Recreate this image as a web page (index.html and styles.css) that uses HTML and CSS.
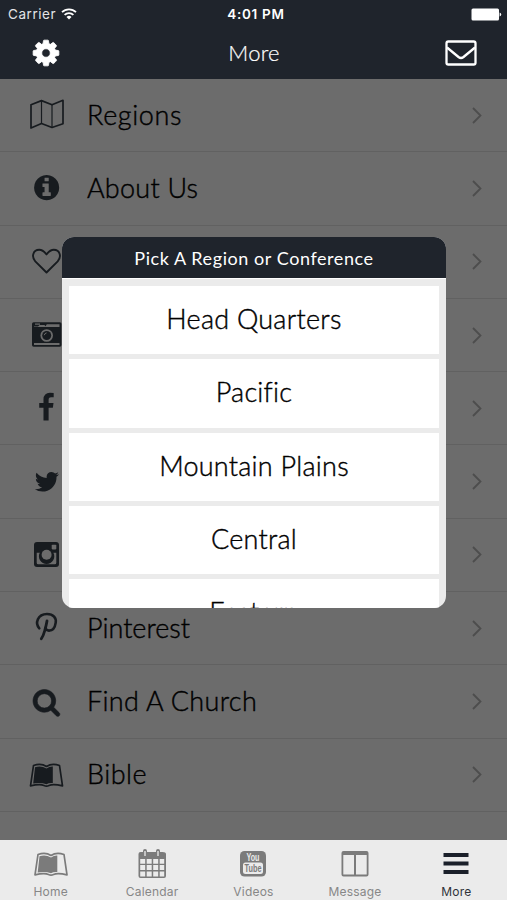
FILE: index.html
```html
<!DOCTYPE html>
<html lang="en">
<head>
<meta charset="utf-8">
<title>More</title>
<link rel="stylesheet" href="styles.css">
</head>
<body>
<div class="app">
  <header class="top">
    <div class="status">
      <div class="carrier"><span>Carrier</span>
        <svg width="16" height="12" viewBox="0 0 16 12" fill="none" stroke="#fff" stroke-width="1.8"><path d="M1 4.2a10 10 0 0 1 14 0M3.6 6.9a6.300 6.300 0 0 1 8.800 0"/><path d="M8 11.500L5.500 9a3.600 3.600 0 0 1 5 0z" fill="#fff" stroke="none"/></svg>
      </div>
      <div class="clock">4:01 PM</div>
      <div class="battery"><svg width="31" height="13" viewBox="0 0 31 13" fill="#fff"><rect x="0.500" y="0.500" width="27.500" height="12" rx="1.500"/><path d="M28.600 4.500q1.600.4 1.600 2t-1.600 2z"/></svg></div>
    </div>
    <div class="nav">
      <svg class="cog" width="30" height="30" viewBox="0 0 1792 1792" fill="#fff"><path stroke="#fff" stroke-width="50" d="M1152 896q0-106-75-181t-181-75-181 75-75 181 75 181 181 75 181-75 75-181zm512-109v222q0 12-8 23t-20 13l-185 28q-19 54-39 91 35 50 107 138 10 12 10 25t-9 23q-27 37-99 108t-94 71q-12 0-26-9l-138-108q-44 23-91 38-16 136-29 186-7 28-36 28h-222q-14 0-24.500-8.500t-11.500-21.500l-28-184q-49-16-90-37l-141 107q-10 9-25 9-14 0-25-11-126-114-165-168-7-10-7-23 0-12 8-23 15-21 51-66.500t54-70.500q-27-50-41-99l-183-27q-13-2-21-12.500t-8-23.500v-222q0-12 8-23t19-13l186-28q14-46 39-92-40-57-107-138-10-12-10-24 0-10 9-23 26-36 98.500-107.500t94.500-71.500q13 0 26 10l138 107q44-23 91-38 16-136 29-186 7-28 36-28h222q14 0 24.500 8.500t11.500 21.500l28 184q49 16 90 37l142-107q9-9 24-9 13 0 25 10 129 119 165 170 7 8 7 22 0 12-8 23-15 21-51 66.500t-54 70.500q26 50 41 98l183 28q13 2 21 12.500t8 23.500z"/></svg>
      <h1>More</h1>
      <svg class="mail" width="32" height="26" viewBox="0 0 32 26" fill="none" stroke="#fff" stroke-width="2.300" stroke-linejoin="round"><rect x="1.500" y="1.500" width="29" height="23" rx="1.800"/><path d="M2 7.500L13.500 17q2.500 1.900 5 0L30 7.500"/></svg>
    </div>
  </header>

  <main class="list">
    <div class="row"><svg class="ico line" viewBox="0 0 40 40"><path stroke-width="1.700" d="M4 9.800L14.500 5.600 25 9.800 36 5.300V28.700L25 32.500 14.500 28.500 4 33z"/><path stroke-width="1.200" d="M14.500 5.600V28.500M25 9.800V32.500"/></svg><span class="name n1">Regions</span><svg class="chev" viewBox="0 0 11 17"><path d="M1 1l7.500 7.500L1 16"/></svg></div>
    <div class="row"><svg class="ico" viewBox="0 0 40 40"><path transform="translate(5 5) scale(.01634)" d="M1152 1376v-160q0-14-9-23t-23-9h-96v-512q0-14-9-23t-23-9h-320q-14 0-23 9t-9 23v160q0 14 9 23t23 9h96v320h-96q-14 0-23 9t-9 23v160q0 14 9 23t23 9h448q14 0 23-9t9-23zm-128-896v-160q0-14-9-23t-23-9h-192q-14 0-23 9t-9 23v160q0 14 9 23t23 9h192q14 0 23-9t9-23zm640 416q0 209-103 385.500t-279.500 279.500-385.500 103-385.500-103-279.500-279.500-103-385.500 103-385.500 279.500-279.500 385.500-103 385.500 103 279.500 279.500 103 385.500z"/></svg><span class="name n2">About Us</span><svg class="chev" viewBox="0 0 11 17"><path d="M1 1l7.500 7.500L1 16"/></svg></div>
    <div class="row"><svg class="ico line" viewBox="0 0 40 40"><path stroke-width="1.900" d="M19.500 30.500L8.300 19.300C4 14.500 6.300 7.800 12.200 7.800c3.700 0 5.500 2.500 7.300 4.600 1.800-2.100 3.600-4.600 7.300-4.600 5.900 0 8.200 6.700 3.900 11.500z"/></svg><span class="name"></span><svg class="chev" viewBox="0 0 11 17"><path d="M1 1l7.500 7.500L1 16"/></svg></div>
    <div class="row"><svg class="ico" viewBox="0 0 40 40"><rect x="5" y="7.300" width="29.500" height="24.500" rx="1.700"/><path class="cut" d="M7 11.500h4l1.500-1.500h5l1 1.200 1.300-2H32.500v2.800H7zM7 28h25.500v1.900H7z"/><rect class="cut" x="8" y="8.500" width="5" height="1.200"/><circle class="cut" cx="19.700" cy="20.500" r="6.300"/><circle cx="19.700" cy="20.500" r="4.500"/><path d="M17.300 20.200q.2-2 2.300-2.300" fill="none" stroke="#6c6c6c"/></svg><span class="name"></span><svg class="chev" viewBox="0 0 11 17"><path d="M1 1l7.500 7.500L1 16"/></svg></div>
    <div class="row"><svg class="ico" viewBox="0 0 40 40"><path transform="translate(4.200 4.700) scale(.01674)" d="M1343 12v264h-157q-86 0-116 36t-30 108v189h293l-39 296h-254v759h-306v-759h-255v-296h255v-218q0-186 104-288.500t277-102.500q147 0 228 12z"/></svg><span class="name"></span><svg class="chev" viewBox="0 0 11 17"><path d="M1 1l7.500 7.500L1 16"/></svg></div>
    <div class="row"><svg class="ico" viewBox="0 0 40 40"><path transform="translate(6.200 6) scale(.01530)" d="M1684 408q-67 98-162 167 1 14 1 42 0 130-38 259.500t-115.500 248.500-184.500 210.500-258 146-323 54.500q-271 0-496-145 35 4 78 4 225 0 401-138-105-2-188-64.500t-114-159.500q33 5 61 5 43 0 85-11-112-23-185.500-111.500t-73.500-205.500v-4q68 38 146 41-66-44-105-115t-39-154q0-88 44-163 121 149 294.500 238.500t371.500 99.500q-8-38-8-74 0-134 94.500-228.500t228.500-94.500q140 0 236 102 109-21 205-78-37 115-142 178 93-10 186-50z"/></svg><span class="name"></span><svg class="chev" viewBox="0 0 11 17"><path d="M1 1l7.500 7.500L1 16"/></svg></div>
    <div class="row"><svg class="ico" viewBox="0 0 40 40"><rect x="7" y="7" width="25" height="25" rx="3"/><path class="cut" d="M9.700 17.700h3.100a7.700 7.700 0 1 0 13.600 0h2.900v10q0 1.500-1.500 1.500H11.200q-1.500 0-1.500-1.500z"/><circle class="cut" cx="19.600" cy="19.700" r="5"/><rect class="cut" x="24.700" y="9.700" width="4.600" height="4.700" rx=".8"/></svg><span class="name"></span><svg class="chev" viewBox="0 0 11 17"><path d="M1 1l7.500 7.500L1 16"/></svg></div>
    <div class="row"><svg class="ico line" viewBox="0 0 40 40"><path stroke-width="2.600" d="M12.300 20.300C7.800 15.500 10.500 6 20 6c6.500 0 9.500 4.200 8.700 8.600-.7 5-3.400 8-6.700 8-2 0-3.500-1.100-3.300-3"/><path stroke-width="2.800" d="M20 13q-1 5.500-2.200 9.500-1.500 5.500-3.500 8.300"/></svg><span class="name n3">Pinterest</span><svg class="chev" viewBox="0 0 11 17"><path d="M1 1l7.500 7.500L1 16"/></svg></div>
    <div class="row"><svg class="ico" viewBox="0 0 40 40"><path stroke="#171b1f" stroke-width="40" transform="translate(5 5.500) scale(.01610)" d="M1216 832q0-185-131.500-316.500t-316.500-131.500-316.500 131.500-131.500 316.500 131.500 316.500 316.500 131.500 316.500-131.500 131.500-316.500zm512 832q0 52-38 90t-90 38q-54 0-90-38l-343-342q-179 124-399 124-143 0-273.500-55.500t-225-150-150-225-55.500-273.500 55.500-273.500 150-225 225-150 273.500-55.500 273.500 55.500 225 150 150 225 55.500 273.500q0 220-124 399l343 343q37 37 37 90z"/></svg><span class="name n4">Find A Church</span><svg class="chev" viewBox="0 0 11 17"><path d="M1 1l7.500 7.500L1 16"/></svg></div>
    <div class="row"><svg class="ico" viewBox="0 0 40 40"><g transform="translate(3 8.500)"><path class="outline" d="M3.500 2Q11-.8 16.500 3 22-.8 29.500 2l3 20.300q-9.500-2-13.500-.3-2.500 1.300-5 0-4-1.700-13.500.3z"/><path d="M5 3.800q6-2 11.500 1.200 3-2.200 6.300-2V19.600q-4.300-.2-6.300 1.200-5.500-2-13.300-.8z"/></g></svg><span class="name n5">Bible</span><svg class="chev" viewBox="0 0 11 17"><path d="M1 1l7.500 7.500L1 16"/></svg></div>
  </main>

  <nav class="tabs">
    <div class="tab"><svg width="34" height="32" viewBox="0 0 34 32"><g transform="translate(.5 4.500)"><path class="outline" d="M3.500 2Q11-.8 16.500 3 22-.8 29.500 2l3 20.300q-9.500-2-13.500-.3-2.500 1.300-5 0-4-1.700-13.500.3z"/><path d="M5 3.800q6-2 11.500 1.200 3-2.200 6.300-2V19.600q-4.300-.2-6.300 1.200-5.500-2-13.300-.8z"/></g></svg><span>Home</span></div>
    <div class="tab"><svg width="34" height="32" viewBox="0 0 34 32"><path fill-rule="evenodd" d="M5.500 4H8V3q0-2 2-2t2 2v1h9V3q0-2 2-2t2 2v1h2.500Q31 4 31 6V28q0 2-2 2H5.500q-2 0-2-2V6q0-2 2-2zM5.200 11v4.700h5V11zm6.500 0v4.700h5V11zm6.500 0v4.700h5V11zm6.500 0v4.700h4.500V11zM5.200 17v5h5v-5zm6.500 0v5h5v-5zm6.500 0v5h5v-5zm6.500 0v5h4.500v-5zM5.200 23.400v5h5v-5zm6.500 0v5h5v-5zm6.500 0v5h5v-5zm6.500 0v5h4.500v-5z"/><path d="M10 3v5M23 3v5" stroke="#ebebeb" stroke-width="1.300"/></svg><span>Calendar</span></div>
    <div class="tab"><svg width="34" height="32" viewBox="0 0 34 32"><rect x="4" y="3" width="26" height="25.500" rx="4.500"/><rect x="7" y="14.500" width="20" height="11.500" rx="2.500" fill="#ebebeb"/><text x="17" y="12.700" textLength="13" lengthAdjust="spacingAndGlyphs" class="yt light">You</text><text x="17" y="24.300" textLength="17" lengthAdjust="spacingAndGlyphs" class="yt">Tube</text></svg><span>Videos</span></div>
    <div class="tab"><svg width="34" height="32" viewBox="0 0 34 32"><path fill-rule="evenodd" d="M5.500 3h23q2 0 2 2v21.500q0 2-2 2h-23q-2 0-2-2V5q0-2 2-2zM5.300 7v19.500H16V7zm12.700 0v19.500h10.700V7z"/></svg><span>Message</span></div>
    <div class="tab active"><svg width="34" height="32" viewBox="0 0 34 32"><path d="M4.500 5h25v4h-25zM4.500 13.500h25v4h-25zM4.500 22h25v4h-25z"/></svg><span>More</span></div>
  </nav>

  <section class="modal">
    <h2>Pick A Region or Conference</h2>
    <div class="options">
      <div class="opt"><span>Head Quarters</span></div>
      <div class="opt"><span>Pacific</span></div>
      <div class="opt"><span>Mountain Plains</span></div>
      <div class="opt"><span>Central</span></div>
      <div class="opt"><span>Eastern</span></div>
    </div>
  </section>
</div>
</body>
</html>
```
FILE: styles.css
```css
* { box-sizing: border-box; }
body { margin: 0; font-family: Lato, "Liberation Sans", sans-serif; }
.app { position: relative; width: 507px; height: 900px; overflow: hidden; background: #6c6c6c; display: flex; flex-direction: column; }
.top { height: 79px; flex: none; background: #1f242c; color: #fff; }
.status { height: 27px; display: grid; grid-template-columns: 1fr auto 1fr; align-items: center; padding: 1px 5px 0 8px; font-family: Inter, sans-serif; font-size: 13.500px; }
.carrier { display: flex; align-items: center; gap: 5px; color: #e3e4e6; letter-spacing: .55px; }
.clock { font-weight: 600; font-size: 13.500px; letter-spacing: .7px; margin-left: 2px; }
.battery { display: flex; justify-content: flex-end; }
.nav { height: 52px; display: grid; grid-template-columns: 1fr auto 1fr; align-items: center; padding: 0 30px 0 31px; }
.mail { justify-self: end; }
h1 { margin: -2px 0 0; font-size: 22px; font-weight: 300; letter-spacing: .2px; color: #fff; -webkit-text-stroke: .2px #fff; }
.list { flex: 1; }
.row { height: 73.300px; border-bottom: 1px solid #616161; display: flex; align-items: center; padding: 0 24px 0 27px; }
.ico { width: 40px; height: 40px; flex: none; fill: #171b1f; }
.line { fill: none; stroke: #171b1f; stroke-linejoin: round; stroke-linecap: round; }
.cut { fill: #6c6c6c; }
.outline { fill: none; stroke: #171b1f; stroke-width: 1.700; stroke-linejoin: round; }
.name { flex: 1; margin: -2px 0 0 20px; font-size: 27px; font-weight: 300; color: #000; white-space: nowrap; -webkit-text-stroke: .4px #000; }
.n1 { letter-spacing: .6px; }
.n2 { letter-spacing: .25px; }
.n3 { letter-spacing: 0; }
.n4 { letter-spacing: .33px; }
.n5 { letter-spacing: .5px; }
.chev { width: 11px; height: 17px; flex: none; fill: none; stroke: #4d4d4d; stroke-width: 1.800; }
.tabs { height: 60px; flex: none; background: #ebebeb; display: grid; grid-template-columns: repeat(5, 1fr); }
.tab { display: flex; flex-direction: column; align-items: center; padding-top: 8px; fill: #7b7b7b; color: #878787; font: 12px/16px Inter, sans-serif; letter-spacing: .2px; }
.tab span { margin-top: 4px; }
.tab .outline { stroke: #7b7b7b; }
.tab.active { fill: #1b202a; color: #30333a; }
.yt { font: 700 11px "Liberation Sans", sans-serif; text-anchor: middle; letter-spacing: 0; }
.light { fill: #ebebeb; }
.modal { position: absolute; left: 62px; top: 237px; width: 384px; height: 371px; border-radius: 12px; overflow: hidden; background: #ebebeb; }
h2 { margin: 0; height: 41px; background: #1f242c; color: #fff; font-size: 18px; line-height: 42px; font-weight: 400; text-align: center; letter-spacing: .57px; }
.options { padding: 8px 7px 0; display: grid; gap: 5px; border-top: 1px solid #fff; padding-top: 7px; }
.opt { height: 68.300px; background: #fff; display: flex; align-items: center; justify-content: center; font-size: 27px; font-weight: 300; color: #000; -webkit-text-stroke: .4px #000; }
.opt span { letter-spacing: .25px; margin-top: -3px; }
```
